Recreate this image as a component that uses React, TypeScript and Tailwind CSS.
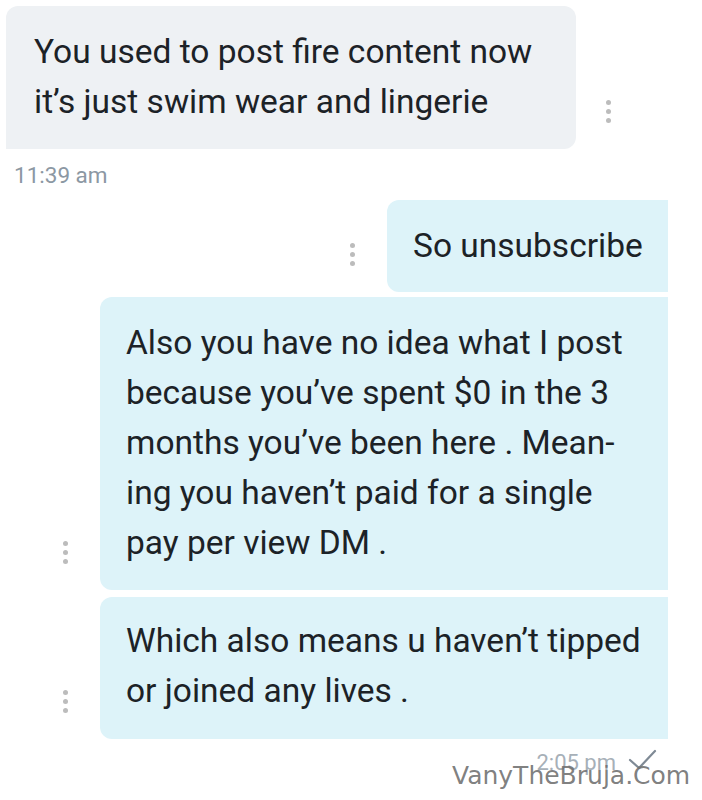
import React from "react";

function Dots() {
  return (
    <div className="flex flex-col items-center gap-[4px] w-[10px]">
      <span className="block w-[5px] h-[5px] rounded-full bg-[#bcbcbc]" />
      <span className="block w-[5px] h-[5px] rounded-full bg-[#bcbcbc]" />
      <span className="block w-[5px] h-[5px] rounded-full bg-[#bcbcbc]" />
    </div>
  );
}

function Outgoing({ children, className = "" }: { children: React.ReactNode; className?: string }) {
  return (
    <div className="flex items-end justify-end pr-[34px]">
      <div className="mr-[30px] mb-[26px]">
        <Dots />
      </div>
      <div className={`bg-[#ddf3f9] rounded-l-[12px] pl-[26px] pr-[16px] ${className}`}>
        {children}
      </div>
    </div>
  );
}

export default function App() {
  return (
    <div
      className="relative w-[702px] h-[800px] bg-white overflow-hidden text-[#1c2227] text-[33.5px] leading-[50px]"
      style={{ fontFamily: "Roboto, 'Noto Sans', sans-serif" }}
    >
      <div className="pt-[6px] pl-[6px] flex items-end">
        <div className="w-[570px] h-[143px] bg-[#eef1f4] rounded-r-[12px] rounded-tl-[12px] pl-[28px] pt-[21px] whitespace-nowrap">
          <p>You used to post fire content now</p>
          <p>it’s just swim wear and lingerie</p>
        </div>
        <div className="ml-[27px] mb-[26px]">
          <Dots />
        </div>
      </div>
      <div className="pl-[14px] pt-[12px] text-[22.5px] leading-[28px] text-[#8c98a3]">11:39 am</div>

      <div className="mt-[11px] flex flex-col">
        <Outgoing className="w-[281px] py-[21px] whitespace-nowrap">
          <p>So unsubscribe</p>
        </Outgoing>
        <div className="h-[5px]" />
        <Outgoing className="w-[568px] pt-[21px] pb-[22px] whitespace-nowrap">
          <p>Also you have no idea what I post</p>
          <p>because you’ve spent $0 in the 3</p>
          <p>months you’ve been here . Mean-</p>
          <p>ing you haven’t paid for a single</p>
          <p>pay per view DM .</p>
        </Outgoing>
        <div className="h-[7px]" />
        <Outgoing className="w-[568px] pt-[19px] pb-[23px] whitespace-nowrap">
          <p>Which also means u haven’t tipped</p>
          <p>or joined any lives .</p>
        </Outgoing>
      </div>

      <div className="flex items-center justify-end pr-[44px] mt-[12px] text-[22px] leading-[24px] text-[#a7b0b8]">
        <span>2:05 pm</span>
        <svg className="ml-[12px] -mt-[6px]" width="30" height="22" viewBox="0 0 30 22" fill="none">
          <path d="M2 11 L11 19 L27 2" stroke="#7f8a95" strokeWidth="2.2" strokeLinecap="round" strokeLinejoin="round" />
        </svg>
      </div>

      <div
        className="absolute left-[452px] top-[761px] text-[25px] leading-[30px] text-[#707070]/90"
        style={{ fontFamily: "'DejaVu Sans', sans-serif" }}
      >
        VanyTheBruja.Com
      </div>
    </div>
  );
}
